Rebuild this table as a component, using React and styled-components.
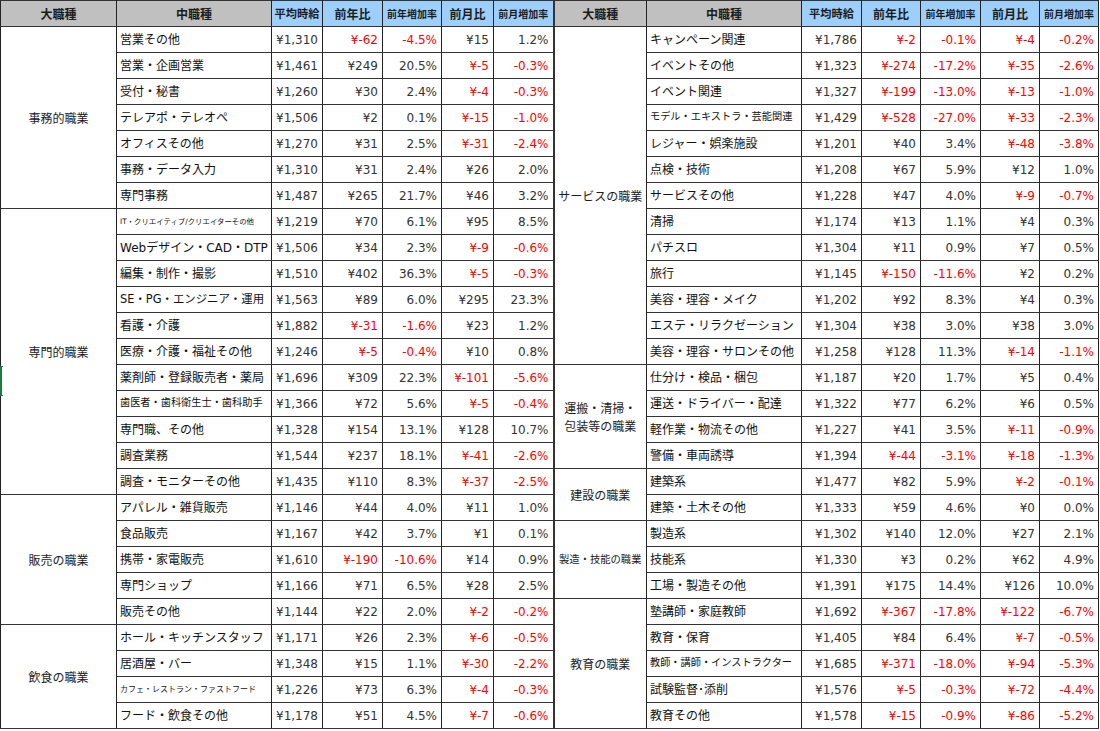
import React from "react";
import styled, { createGlobalStyle, css } from "styled-components";

const GlobalStyle = createGlobalStyle`
  html, body { margin: 0; padding: 0; background: #ffffff; }
  body {
    font-family: "DejaVu Sans", "Noto Sans CJK JP", sans-serif;
    color: #111;
  }
`;

const Sheet = styled.div`
  position: relative;
  width: 1100px;
  height: 731px;
  overflow: hidden;
  background: #fff;
`;

const Grid = styled.table`
  border-collapse: collapse;
  table-layout: fixed;
  width: 1098px;
`;

const Col = styled.col`
  width: ${(p) => p.$w}px;
`;

const HeadRow = styled.tr`
  height: 26px;
`;

const BodyRow = styled.tr`
  height: 26px;
`;

const cellBase = css`
  border: 1px solid #333;
  border-left-color: #222;
  border-right-color: #222;
  padding: 0;
  box-sizing: border-box;
  white-space: nowrap;
  overflow: hidden;
  line-height: 1;
`;

const HeadCell = styled.th`
  ${cellBase}
  background: ${(p) => (p.$tone === "grey" ? "#c0c0c0" : "#9dcffa")};
  font-family: "Noto Sans CJK JP", sans-serif;
  font-weight: 700;
  font-size: ${(p) => p.$size || 12}px;
  color: #1c1c1c;
  text-align: center;
  vertical-align: middle;
  ${(p) => p.$split && "border-left: 2px solid #333;"}
`;

const GroupCell = styled.td`
  ${cellBase}
  font-family: "Noto Sans CJK JP", sans-serif;
  font-size: ${(p) => p.$size || 12}px;
  line-height: 1.45;
  color: #1c1c1c;
  text-align: center;
  vertical-align: middle;
  white-space: pre-line;
  ${(p) => p.$split && "border-left: 2px solid #333;"}
`;

const NameCell = styled.td`
  ${cellBase}
  font-family: "DejaVu Sans", "Noto Sans CJK JP", sans-serif;
  font-size: ${(p) => p.$size || 12}px;
  color: #111;
  text-align: left;
  vertical-align: middle;
  padding-left: 3px;
`;

const NumCell = styled.td`
  ${cellBase}
  font-family: "DejaVu Sans", "Noto Sans CJK JP", sans-serif;
  font-size: 12px;
  color: ${(p) => (p.$neg ? "#ff0000" : "#333")};
  text-align: right;
  vertical-align: middle;
  padding-right: 4px;
`;

const SelectionMark = styled.div`
  position: absolute;
  left: 0;
  top: 366px;
  width: 2px;
  height: 30px;
  background: #1d7a45;
  &::before,
  &::after {
    content: "";
    position: absolute;
    left: 0;
    width: 3px;
    height: 1px;
    background: #1d7a45;
  }
  &::before { top: 0; }
  &::after { bottom: 0; }
`;

const leftGroups = [
  {
    label: "事務的職業",
    rows: [
      ["営業その他", "¥1,310", "¥-62", "-4.5%", "¥15", "1.2%"],
      ["営業・企画営業", "¥1,461", "¥249", "20.5%", "¥-5", "-0.3%"],
      ["受付・秘書", "¥1,260", "¥30", "2.4%", "¥-4", "-0.3%"],
      ["テレアポ・テレオペ", "¥1,506", "¥2", "0.1%", "¥-15", "-1.0%"],
      ["オフィスその他", "¥1,270", "¥31", "2.5%", "¥-31", "-2.4%"],
      ["事務・データ入力", "¥1,310", "¥31", "2.4%", "¥26", "2.0%"],
      ["専門事務", "¥1,487", "¥265", "21.7%", "¥46", "3.2%"],
    ],
  },
  {
    label: "専門的職業",
    rows: [
      ["IT・クリエイティブ/クリエイターその他", "¥1,219", "¥70", "6.1%", "¥95", "8.5%", 7.4],
      ["Webデザイン・CAD・DTP", "¥1,506", "¥34", "2.3%", "¥-9", "-0.6%"],
      ["編集・制作・撮影", "¥1,510", "¥402", "36.3%", "¥-5", "-0.3%"],
      ["SE・PG・エンジニア・運用", "¥1,563", "¥89", "6.0%", "¥295", "23.3%", 11.4],
      ["看護・介護", "¥1,882", "¥-31", "-1.6%", "¥23", "1.2%"],
      ["医療・介護・福祉その他", "¥1,246", "¥-5", "-0.4%", "¥10", "0.8%"],
      ["薬剤師・登録販売者・薬局", "¥1,696", "¥309", "22.3%", "¥-101", "-5.6%"],
      ["歯医者・歯科衛生士・歯科助手", "¥1,366", "¥72", "5.6%", "¥-5", "-0.4%", 10.2],
      ["専門職、その他", "¥1,328", "¥154", "13.1%", "¥128", "10.7%"],
      ["調査業務", "¥1,544", "¥237", "18.1%", "¥-41", "-2.6%"],
      ["調査・モニターその他", "¥1,435", "¥110", "8.3%", "¥-37", "-2.5%"],
    ],
  },
  {
    label: "販売の職業",
    rows: [
      ["アパレル・雑貨販売", "¥1,146", "¥44", "4.0%", "¥11", "1.0%"],
      ["食品販売", "¥1,167", "¥42", "3.7%", "¥1", "0.1%"],
      ["携帯・家電販売", "¥1,610", "¥-190", "-10.6%", "¥14", "0.9%"],
      ["専門ショップ", "¥1,166", "¥71", "6.5%", "¥28", "2.5%"],
      ["販売その他", "¥1,144", "¥22", "2.0%", "¥-2", "-0.2%"],
    ],
  },
  {
    label: "飲食の職業",
    rows: [
      ["ホール・キッチンスタッフ", "¥1,171", "¥26", "2.3%", "¥-6", "-0.5%"],
      ["居酒屋・バー", "¥1,348", "¥15", "1.1%", "¥-30", "-2.2%"],
      ["カフェ・レストラン・ファストフード", "¥1,226", "¥73", "6.3%", "¥-4", "-0.3%", 8],
      ["フード・飲食その他", "¥1,178", "¥51", "4.5%", "¥-7", "-0.6%"],
    ],
  },
];

const rightGroups = [
  {
    label: "サービスの職業",
    rows: [
      ["キャンペーン関連", "¥1,786", "¥-2", "-0.1%", "¥-4", "-0.2%"],
      ["イベントその他", "¥1,323", "¥-274", "-17.2%", "¥-35", "-2.6%"],
      ["イベント関連", "¥1,327", "¥-199", "-13.0%", "¥-13", "-1.0%"],
      ["モデル・エキストラ・芸能関連", "¥1,429", "¥-528", "-27.0%", "¥-33", "-2.3%", 10.2],
      ["レジャー・娯楽施設", "¥1,201", "¥40", "3.4%", "¥-48", "-3.8%"],
      ["点検・技術", "¥1,208", "¥67", "5.9%", "¥12", "1.0%"],
      ["サービスその他", "¥1,228", "¥47", "4.0%", "¥-9", "-0.7%"],
      ["清掃", "¥1,174", "¥13", "1.1%", "¥4", "0.3%"],
      ["パチスロ", "¥1,304", "¥11", "0.9%", "¥7", "0.5%"],
      ["旅行", "¥1,145", "¥-150", "-11.6%", "¥2", "0.2%"],
      ["美容・理容・メイク", "¥1,202", "¥92", "8.3%", "¥4", "0.3%"],
      ["エステ・リラクゼーション", "¥1,304", "¥38", "3.0%", "¥38", "3.0%"],
      ["美容・理容・サロンその他", "¥1,258", "¥128", "11.3%", "¥-14", "-1.1%"],
    ],
  },
  {
    label: "運搬・清掃・\n包装等の職業",
    rows: [
      ["仕分け・検品・梱包", "¥1,187", "¥20", "1.7%", "¥5", "0.4%"],
      ["運送・ドライバー・配達", "¥1,322", "¥77", "6.2%", "¥6", "0.5%"],
      ["軽作業・物流その他", "¥1,227", "¥41", "3.5%", "¥-11", "-0.9%"],
      ["警備・車両誘導", "¥1,394", "¥-44", "-3.1%", "¥-18", "-1.3%"],
    ],
  },
  {
    label: "建設の職業",
    rows: [
      ["建築系", "¥1,477", "¥82", "5.9%", "¥-2", "-0.1%"],
      ["建築・土木その他", "¥1,333", "¥59", "4.6%", "¥0", "0.0%"],
    ],
  },
  {
    label: "製造・技能の職業",
    size: 10.3,
    rows: [
      ["製造系", "¥1,302", "¥140", "12.0%", "¥27", "2.1%"],
      ["技能系", "¥1,330", "¥3", "0.2%", "¥62", "4.9%"],
      ["工場・製造その他", "¥1,391", "¥175", "14.4%", "¥126", "10.0%"],
    ],
  },
  {
    label: "教育の職業",
    rows: [
      ["塾講師・家庭教師", "¥1,692", "¥-367", "-17.8%", "¥-122", "-6.7%"],
      ["教育・保育", "¥1,405", "¥84", "6.4%", "¥-7", "-0.5%"],
      ["教師・講師・インストラクター", "¥1,685", "¥-371", "-18.0%", "¥-94", "-5.3%", 10.2],
      ["試験監督･添削", "¥1,576", "¥-5", "-0.3%", "¥-72", "-4.4%"],
      ["教育その他", "¥1,578", "¥-15", "-0.9%", "¥-86", "-5.2%"],
    ],
  },
];

function flatten(groups) {
  const out = [];
  groups.forEach((g) => {
    g.rows.forEach((r, i) => {
      out.push({ group: i === 0 ? g : null, row: r });
    });
  });
  return out;
}

const leftRows = flatten(leftGroups);
const rightRows = flatten(rightGroups);

const widths = [116, 155, 51, 60, 59, 52, 60, 93, 155, 60, 59, 60, 59, 59];

function Half({ entry, split }) {
  const { group, row } = entry;
  const [name, avg, yDiff, yRate, mDiff, mRate, size] = row;
  return (
    <>
      {group && (
        <GroupCell rowSpan={group.rows.length} $split={split} $size={group.size}>
          {group.label}
        </GroupCell>
      )}
      <NameCell $size={size}>{name}</NameCell>
      <NumCell>{avg}</NumCell>
      <NumCell $neg={yDiff.includes("-")}>{yDiff}</NumCell>
      <NumCell $neg={yRate.includes("-")}>{yRate}</NumCell>
      <NumCell $neg={mDiff.includes("-")}>{mDiff}</NumCell>
      <NumCell $neg={mRate.includes("-")}>{mRate}</NumCell>
    </>
  );
}

function HeadHalf({ split }) {
  return (
    <>
      <HeadCell $tone="grey" $split={split}>大職種</HeadCell>
      <HeadCell $tone="grey">中職種</HeadCell>
      <HeadCell $tone="blue" $size={11.2}>平均時給</HeadCell>
      <HeadCell $tone="blue">前年比</HeadCell>
      <HeadCell $tone="blue" $size={10}>前年増加率</HeadCell>
      <HeadCell $tone="blue">前月比</HeadCell>
      <HeadCell $tone="blue" $size={10}>前月増加率</HeadCell>
    </>
  );
}

export default function App() {
  return (
    <>
      <GlobalStyle />
      <Sheet>
        <Grid>
          <colgroup>
            {widths.map((w, i) => (
              <Col key={i} $w={w} />
            ))}
          </colgroup>
          <thead>
            <HeadRow>
              <HeadHalf />
              <HeadHalf split />
            </HeadRow>
          </thead>
          <tbody>
            {leftRows.map((l, i) => (
              <BodyRow key={i}>
                <Half entry={l} />
                <Half entry={rightRows[i]} split />
              </BodyRow>
            ))}
          </tbody>
        </Grid>
        <SelectionMark />
      </Sheet>
    </>
  );
}
